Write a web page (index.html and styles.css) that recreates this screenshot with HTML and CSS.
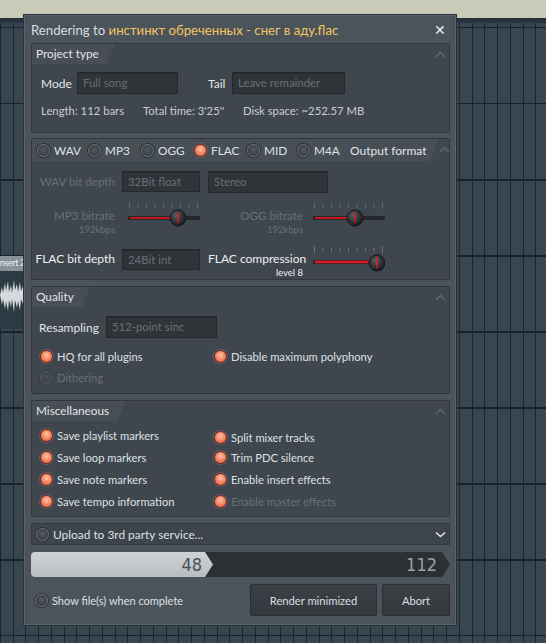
FILE: index.html
```html
<!DOCTYPE html>
<html lang="en">
<head>
    <meta charset="UTF-8">
    <meta name="viewport" content="width=device-width, initial-scale=1.0">
    <title>Rendering</title>
    <link rel="stylesheet" href="styles.css">
</head>
<body>

<div class="desk">
    <!-- playlist behind the dialog -->
    <div class="track-name">nsert 2</div>
    <div class="track-clip">
        <svg width="24" height="40" viewBox="0 0 24 40">
            <path d="M0 18 L2 10 L3 16 L5 6 L6 14 L8 4 L9 15 L11 8 L12 16 L14 3 L15 13 L17 7 L18 15 L20 5 L21 14 L23 9 L24 18 L23 27 L21 22 L20 33 L18 24 L17 31 L15 23 L14 35 L12 22 L11 30 L9 23 L8 34 L6 24 L5 32 L3 22 L2 28 Z" fill="#d6dade"/>
        </svg>
    </div>

    <div class="dialog">
        <div class="titlebar">
            <span class="title">Rendering to <span class="file">инстинкт обреченных - снег в аду.flac</span></span>
            <span class="close">✕</span>
        </div>

        <div class="dialog-body">

            <!-- Project type -->
            <section class="panel panel-project">
                <div class="panel-head">
                    <span class="tab">Project type</span>
                    <svg class="chev" width="11" height="7" viewBox="0 0 11 7"><polyline points="1,6 5.5,1.5 10,6" fill="none" stroke="#5d646b" stroke-width="1.6"/></svg>
                </div>
                <div class="mode-row">
                    <span class="lbl">Mode</span>
                    <div class="field">Full song</div>
                    <span></span>
                    <span class="lbl">Tail</span>
                    <div class="field">Leave remainder</div>
                </div>
                <div class="info-row">
                    <span class="info-length">Length: 112 bars</span>
                    <span class="info-time">Total time: 3'25''</span>
                    <span>Disk space: ~252.57 MB</span>
                </div>
            </section>

            <!-- Output format -->
            <section class="panel panel-output">
                <div class="panel-head">
                    <div class="format-tab">
                        <span class="opt fmt fmt-wav"><span class="radio"></span>WAV</span>
                        <span class="opt fmt"><span class="radio"></span>MP3</span>
                        <span class="opt fmt"><span class="radio"></span>OGG</span>
                        <span class="opt fmt"><span class="radio on"></span>FLAC</span>
                        <span class="opt fmt fmt-mid"><span class="radio"></span>MID</span>
                        <span class="opt fmt"><span class="radio"></span>M4A</span>
                        <span class="format-title">Output format</span>
                    </div>
                    <svg class="chev" width="11" height="7" viewBox="0 0 11 7"><polyline points="1,6 5.5,1.5 10,6" fill="none" stroke="#5d646b" stroke-width="1.6"/></svg>
                </div>

                <div class="out-grid">
                    <span class="out-lbl dim row-wav">WAV bit depth</span>
                    <div class="field field-wav row-wav">32Bit float</div>
                    <div class="field field-stereo row-wav">Stereo</div>

                    <div class="out-lbl dim row-rate col-lbl">MP3 bitrate<small>192kbps</small></div>
                    <svg class="slider row-rate col-ctl" width="72" height="30" viewBox="0 0 72 30">
                        <defs>
                            <radialGradient id="knob" cx="40%" cy="35%" r="65%">
                                <stop offset="0" stop-color="#5a6067"/>
                                <stop offset="0.6" stop-color="#2e3236"/>
                                <stop offset="1" stop-color="#1b1e21"/>
                            </radialGradient>
                        </defs>
                        <g stroke="#5f666d" stroke-width="1">
                            <line x1="1.5" y1="2" x2="1.5" y2="9"/><line x1="10" y1="4" x2="10" y2="8"/><line x1="18.5" y1="4" x2="18.5" y2="8"/><line x1="27" y1="4" x2="27" y2="8"/><line x1="35.5" y1="4" x2="35.5" y2="8"/><line x1="44" y1="4" x2="44" y2="8"/><line x1="52.5" y1="4" x2="52.5" y2="8"/><line x1="61" y1="4" x2="61" y2="8"/><line x1="69.5" y1="2" x2="69.5" y2="9"/>
                        </g>
                        <line x1="1" y1="18" x2="71" y2="18" stroke="#24282c" stroke-width="4" stroke-linecap="round"/>
                        <line x1="2" y1="18" x2="50" y2="18" stroke="#c8161d" stroke-width="2"/>
                        <circle cx="50" cy="18" r="8" fill="url(#knob)" stroke="#17191b"/>
                        <line x1="50" y1="12" x2="50" y2="23" stroke="#d71a22" stroke-width="1.5"/>
                    </svg>
                    <div class="out-lbl dim row-rate col-lbl2">OGG bitrate<small>192kbps</small></div>
                    <svg class="slider row-rate col-ctl2" width="72" height="30" viewBox="0 0 72 30">
                        <g stroke="#5f666d" stroke-width="1">
                            <line x1="1.5" y1="2" x2="1.5" y2="9"/><line x1="10" y1="4" x2="10" y2="8"/><line x1="18.5" y1="4" x2="18.5" y2="8"/><line x1="27" y1="4" x2="27" y2="8"/><line x1="35.5" y1="4" x2="35.5" y2="8"/><line x1="44" y1="4" x2="44" y2="8"/><line x1="52.5" y1="4" x2="52.5" y2="8"/><line x1="61" y1="4" x2="61" y2="8"/><line x1="69.5" y1="2" x2="69.5" y2="9"/>
                        </g>
                        <line x1="1" y1="18" x2="71" y2="18" stroke="#24282c" stroke-width="4" stroke-linecap="round"/>
                        <line x1="2" y1="18" x2="42" y2="18" stroke="#c8161d" stroke-width="2"/>
                        <circle cx="42" cy="18" r="8" fill="url(#knob)" stroke="#17191b"/>
                        <line x1="42" y1="12" x2="42" y2="23" stroke="#d71a22" stroke-width="1.5"/>
                    </svg>

                    <span class="out-lbl strong row-flac col-lbl">FLAC bit depth</span>
                    <div class="field field-wav row-flac">24Bit int</div>
                    <div class="out-lbl strong row-flac col-lbl2">FLAC compression<small>level 8</small></div>
                    <svg class="slider row-flac col-ctl2" width="72" height="30" viewBox="0 0 72 30">
                        <g stroke="#6a7178" stroke-width="1">
                            <line x1="1.5" y1="2" x2="1.5" y2="9"/><line x1="10" y1="4" x2="10" y2="8"/><line x1="18.5" y1="4" x2="18.5" y2="8"/><line x1="27" y1="4" x2="27" y2="8"/><line x1="35.5" y1="4" x2="35.5" y2="8"/><line x1="44" y1="4" x2="44" y2="8"/><line x1="52.5" y1="4" x2="52.5" y2="8"/><line x1="61" y1="4" x2="61" y2="8"/><line x1="69.5" y1="2" x2="69.5" y2="9"/>
                        </g>
                        <line x1="1" y1="18" x2="71" y2="18" stroke="#24282c" stroke-width="4" stroke-linecap="round"/>
                        <line x1="2" y1="18" x2="64" y2="18" stroke="#e0161e" stroke-width="2.5"/>
                        <circle cx="64" cy="19" r="8" fill="url(#knob)" stroke="#17191b"/>
                        <line x1="64" y1="13" x2="64" y2="24" stroke="#e81c24" stroke-width="1.5"/>
                    </svg>
                </div>
            </section>

            <!-- Quality -->
            <section class="panel panel-quality">
                <div class="panel-head">
                    <span class="tab">Quality</span>
                    <svg class="chev" width="11" height="7" viewBox="0 0 11 7"><polyline points="1,6 5.5,1.5 10,6" fill="none" stroke="#5d646b" stroke-width="1.6"/></svg>
                </div>
                <div class="resample-row">
                    <span class="lbl">Resampling</span>
                    <div class="field field-resample">512-point sinc</div>
                </div>
                <div class="opt-grid">
                    <span class="opt"><span class="radio on"></span>HQ for all plugins</span>
                    <span class="opt"><span class="radio on"></span>Disable maximum polyphony</span>
                    <span class="opt dim"><span class="radio off-dim"></span>Dithering</span>
                </div>
            </section>

            <!-- Miscellaneous -->
            <section class="panel panel-misc">
                <div class="panel-head">
                    <span class="tab">Miscellaneous</span>
                    <svg class="chev" width="11" height="7" viewBox="0 0 11 7"><polyline points="1,6 5.5,1.5 10,6" fill="none" stroke="#5d646b" stroke-width="1.6"/></svg>
                </div>
                <div class="opt-grid misc-grid">
                    <span class="opt"><span class="radio on"></span>Save playlist markers</span>
                    <span class="opt first-right"><span class="radio on"></span>Split mixer tracks</span>
                    <span class="opt"><span class="radio on"></span>Save loop markers</span>
                    <span class="opt"><span class="radio on"></span>Trim PDC silence</span>
                    <span class="opt"><span class="radio on"></span>Save note markers</span>
                    <span class="opt"><span class="radio on"></span>Enable insert effects</span>
                    <span class="opt"><span class="radio on"></span>Save tempo information</span>
                    <span class="opt dim"><span class="radio on"></span>Enable master effects</span>
                </div>
            </section>

            <!-- Upload -->
            <div class="upload">
                <span class="opt"><span class="radio"></span>Upload to 3rd party service...</span>
                <svg width="11" height="7" viewBox="0 0 11 7"><polyline points="1,1.5 5.5,5.5 10,1.5" fill="none" stroke="#dfe3e7" stroke-width="1.6"/></svg>
            </div>

            <!-- Progress -->
            <div class="progress">
                <div class="progress-done">48</div>
                <span class="progress-total">112</span>
            </div>

            <div class="bottom-row">
                <span class="opt show-files"><span class="radio"></span>Show file(s) when complete</span>
                <button class="btn btn-minimized">Render minimized</button>
                <button class="btn btn-abort">Abort</button>
            </div>

        </div>
    </div>
</div>

</body>
</html>
```

FILE: styles.css
```css
body {
    margin: 0;
    font-family: Lato, "Open Sans", sans-serif;
    color: #dde1e5;
}
.desk {
    position: relative;
    width: 546px;
    height: 643px;
    overflow: hidden;
    background:
        linear-gradient(#c9ccb9, #c9ccb9) 0 0 / 100% 18px no-repeat,
        linear-gradient(#222e37, #2b3841) 0 18px / 100% 5px no-repeat,
        repeating-linear-gradient(90deg, #1b2630 0 1px, transparent 1px 12.75px),
        repeating-linear-gradient(180deg, #17222b 0 1.5px, transparent 1.5px 76px) 0 27px,
        #37464f;
}

/* playlist leftovers on the left */
.track-name {
    position: absolute;
    left: 0;
    top: 256px;
    width: 24px;
    height: 15px;
    background: #88909a;
    color: #eef0f2;
    font-size: 8.5px;
    letter-spacing: -0.2px;
    line-height: 15px;
    white-space: nowrap;
}
.track-clip {
    position: absolute;
    left: 0;
    top: 271px;
    width: 24px;
    height: 58px;
    background: #2c3a44;
}
.track-clip svg {
    display: block;
    margin-top: 6px;
}

/* dialog window */
.dialog {
    position: absolute;
    left: 24px;
    top: 15px;
    width: 432px;
    height: 610px;
    box-sizing: border-box;
    background: #4b535b;
    border: 1px solid #5a626a;
    box-shadow: 0 0 0 1px #2a3239;
}
.titlebar {
    height: 27px;
    display: flex;
    align-items: center;
    justify-content: space-between;
    padding: 0 9px 0 6px;
}
.title {
    font-size: 13.2px;
    color: #d9dde1;
    white-space: nowrap;
}
.file {
    color: #f4c660;
}
.close {
    font-size: 14px;
    color: #eef0f2;
}
.dialog-body {
    padding: 0 5px 0 6px;
}

/* panels */
.panel {
    box-sizing: border-box;
    background: #3f464e;
    border: 1px solid #30363c;
    border-radius: 2px;
}
.panel-head {
    height: 20px;
    display: flex;
    align-items: flex-start;
}
.tab {
    height: 20px;
    line-height: 20px;
    padding: 0 16px 0 4px;
    background: #474e56;
    clip-path: polygon(0 0, 100% 0, calc(100% - 8px) 100%, 0 100%);
    font-size: 11.8px;
    color: #e2e5e8;
}
.chev {
    flex: none;
    margin: 7px 3px 0 auto;
}
.lbl {
    font-size: 12px;
    color: #e2e5e8;
}
.field {
    box-sizing: border-box;
    height: 22px;
    line-height: 20px;
    padding: 0 5px;
    background: #2f3439;
    border: 1px solid #24282c;
    box-shadow: inset 0 1px 0 #26292d;
    font-size: 11.4px;
    color: #687077;
    white-space: nowrap;
    overflow: hidden;
}
.dim {
    color: #687077;
}

/* project type */
.panel-project {
    height: 90px;
}
.mode-row {
    display: grid;
    grid-template-columns: 36px 101px 30px 24px 113px;
    align-items: center;
    margin: 8px 0 0 9px;
}
.info-row {
    display: flex;
    margin: 10px 0 0 9px;
    font-size: 11.3px;
    color: #c9cdd1;
}
.info-length {
    width: 102px;
}
.info-time {
    width: 100px;
}

/* output format */
.panel-output {
    height: 142px;
    margin-top: 5px;
}
.panel-output .panel-head {
    height: 22px;
}
.format-tab {
    flex: none;
    display: flex;
    align-items: center;
    height: 22px;
    padding: 0 12px 0 5px;
    background: #474e56;
    clip-path: polygon(0 0, 100% 0, calc(100% - 8px) 100%, 0 100%);
}
.opt {
    display: flex;
    align-items: center;
    gap: 4px;
    font-size: 11.2px;
    color: #dde1e5;
    white-space: nowrap;
}
.opt.dim {
    color: #687077;
}
.fmt {
    flex: none;
    width: 53px;
    font-size: 11.8px;
}
.fmt-wav {
    width: 51px;
}
.fmt-mid {
    width: 50px;
}
.format-title {
    flex: none;
    white-space: nowrap;
    font-size: 12px;
    color: #e2e5e8;
}
.radio {
    box-sizing: border-box;
    width: 13px;
    height: 13px;
    flex: none;
    border-radius: 50%;
    background: radial-gradient(circle at 50% 45%, #555b61 0, #373c41 75%);
    border: 1.5px solid #6f757b;
    box-shadow: 0 0 0 1px #2b2f33;
}
.radio.on {
    background: radial-gradient(circle at 50% 38%, #ffc6aa 0, #f68a66 45%, #d8573a 100%);
    border-color: #6f2c24;
    box-shadow: 0 0 0 1px #6a5c5b;
}
.radio.off-dim {
    opacity: 0.45;
}

.out-grid {
    display: grid;
    grid-template-columns: 83px 7px 86px 95px 10px 72px;
    grid-template-rows: 21px 36px 32px;
    row-gap: 8px;
    margin-top: 10px;
}
.out-lbl {
    grid-column: 1;
    text-align: right;
    font-size: 11.6px;
    line-height: 15px;
    white-space: nowrap;
}
.out-lbl small {
    display: block;
    font-size: 9.5px;
    line-height: 13px;
}
.out-lbl.strong {
    color: #eef0f2;
    font-size: 12px;
}
.row-wav {
    grid-row: 1;
    align-self: center;
}
.row-rate {
    grid-row: 2;
}
.row-flac {
    grid-row: 3;
}
.field-wav {
    grid-column: 3;
    width: 78px;
    height: 21px;
}
.field-stereo {
    grid-column: 4 / 7;
    width: 120px;
    height: 22px;
}
.row-rate.out-lbl {
    margin-top: 8px;
}
.row-flac.out-lbl {
    margin-top: 7px;
}
.row-flac.field {
    margin-top: 5px;
}
.col-ctl {
    grid-column: 3;
    margin-left: 6px;
}
.col-lbl2 {
    grid-column: 4;
}
.col-ctl2 {
    grid-column: 6;
}
.slider {
    display: block;
}

/* quality */
.panel-quality {
    height: 108px;
    margin-top: 6px;
}
.resample-row {
    display: flex;
    align-items: center;
    margin: 9px 0 0 7px;
}
.field-resample {
    width: 111px;
    margin-left: 7px;
}
.opt-grid {
    display: grid;
    grid-template-columns: 174px 1fr;
    grid-auto-rows: 21px;
    align-items: center;
    margin: 8px 0 0 8px;
}

/* miscellaneous */
.panel-misc {
    height: 117px;
    margin-top: 6px;
}
.misc-grid {
    grid-auto-rows: 22px;
    margin-top: 3px;
}
.first-right {
    margin-top: 4px;
}

/* upload strip */
.upload {
    box-sizing: border-box;
    height: 22px;
    margin-top: 6px;
    display: flex;
    align-items: center;
    justify-content: space-between;
    padding: 0 3px 0 4px;
    background: #3d444b;
    border: 1px solid #343a40;
}
.upload .opt {
    font-size: 11.9px;
}

/* progress */
.progress {
    position: relative;
    height: 25px;
    margin-top: 7px;
    background: #2c3035;
    border-radius: 4px 0 0 4px;
    clip-path: polygon(0 0, calc(100% - 8px) 0, 100% 50%, calc(100% - 8px) 100%, 0 100%);
    font-family: "Liberation Sans Narrow", "DejaVu Sans Condensed", sans-serif;
    font-stretch: condensed;
    font-size: 18px;
    line-height: 25px;
    color: #9aa0a6;
}
.progress-done {
    width: 182px;
    height: 25px;
    box-sizing: border-box;
    padding-right: 11px;
    text-align: right;
    background: linear-gradient(#cfd3d7, #b9bdc2);
    border-radius: 4px 0 0 4px;
    clip-path: polygon(0 0, calc(100% - 8px) 0, 100% 50%, calc(100% - 8px) 100%, 0 100%);
    color: #4a5056;
}
.progress-total {
    position: absolute;
    right: 13px;
    top: 0;
}

/* bottom row */
.bottom-row {
    display: flex;
    align-items: center;
    margin-top: 7px;
    height: 32px;
}
.show-files {
    padding-left: 4px;
    margin-right: auto;
    font-size: 11px;
}
.btn {
    height: 32px;
    background: linear-gradient(#3b4046, #34393e);
    border: 1px solid #2a2e32;
    border-radius: 2px;
    color: #d9dde1;
    font-family: Lato, "Open Sans", sans-serif;
    font-size: 11.2px;
}
.btn-minimized {
    width: 127px;
}
.btn-abort {
    width: 68px;
    margin-left: 5px;
}
```
